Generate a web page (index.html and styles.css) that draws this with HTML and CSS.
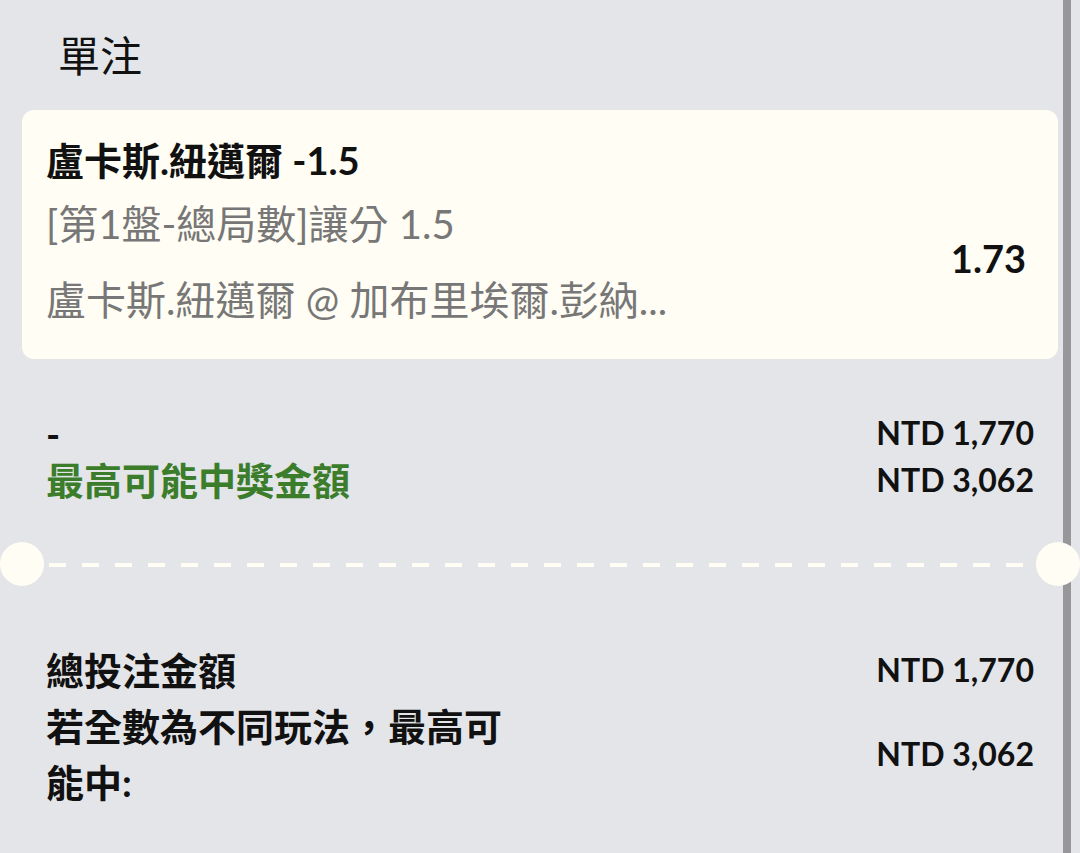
FILE: index.html
```
<!DOCTYPE html>
<html lang="zh-Hant">
<head>
    <meta charset="UTF-8">
    <title>單注</title>
    <link rel="stylesheet" href="styles.css">
</head>
<body>
<div class="page">
    <h1 class="title">單注</h1>

    <div class="betCard">
        <div class="betName">盧卡斯.紐邁爾 -1.5</div>
        <div class="betInfo">[第1盤-總局數]讓分 1.5</div>
        <div class="betInfo betMatch">盧卡斯.紐邁爾 @ 加布里埃爾.彭納...</div>
        <div class="betOdds">1.73</div>
    </div>

    <div class="summary">
        <div class="row">
            <span class="label">-</span>
            <span class="amount">NTD 1,770</span>
        </div>
        <div class="row">
            <span class="label green">最高可能中獎金額</span>
            <span class="amount">NTD 3,062</span>
        </div>
    </div>

    <div class="divider">
        <span class="hole"></span>
        <span class="dashes"></span>
        <span class="hole"></span>
    </div>

    <div class="total">
        <div class="row">
            <span class="label">總投注金額</span>
            <span class="amount">NTD 1,770</span>
        </div>
        <div class="row">
            <span class="label wrap">若全數為不同玩法，最高可能中:</span>
            <span class="amount">NTD 3,062</span>
        </div>
    </div>
</div>
<div class="scrollBar"></div>
</body>
</html>
```

FILE: styles.css
```
html, body {
    margin: 0;
    height: 100%;
}

body {
    background-color: #e4e5e8;
    font-family: Lato, "Noto Sans CJK TC", sans-serif;
    color: #111;
    position: relative;
    overflow: hidden;
}

.page {
    padding: 0 22px;
}

.title {
    margin: 0;
    padding: 28px 0 0 36px;
    height: 110px;
    box-sizing: border-box;
    font-size: 42px;
    font-weight: 400;
    line-height: 56px;
}

.betCard {
    background-color: #fffdf4;
    border-radius: 12px;
    height: 249px;
    box-sizing: border-box;
    padding: 28px 32px 0 24px;
    display: grid;
    grid-template-columns: 1fr auto;
    grid-template-rows: 44px 44px 44px;
    row-gap: 20px;
}

.betName {
    font-size: 38px;
    font-weight: 700;
    line-height: 44px;
}

.betInfo {
    grid-column: 1;
    font-size: 40px;
    line-height: 44px;
    color: #777;
}

.betMatch {
    margin-top: 12px;
}

.betOdds {
    grid-column: 2;
    grid-row: 2 / 4;
    align-self: center;
    margin-top: 4px;
    font-size: 38px;
    font-weight: 700;
}

.summary {
    padding: 52px 24px 0 24px;
}

.row {
    display: flex;
    justify-content: space-between;
    align-items: center;
}

.label {
    font-size: 38px;
    font-weight: 700;
    line-height: 46px;
}

.green {
    color: #3b7d2b;
}

.amount {
    font-size: 32px;
    font-weight: 700;
    line-height: 44px;
}

.summary .row:first-child .amount {
    margin-bottom: 2px;
}

.divider {
    position: relative;
    display: flex;
    align-items: center;
    height: 44px;
    margin: 39px -22px 0 -22px;
    z-index: 1;
}

.hole {
    width: 44px;
    height: 44px;
    border-radius: 50%;
    background-color: #fffdf4;
    flex: none;
}

.dashes {
    flex: 1;
    height: 4px;
    margin: 2px 5px 0 5px;
    background: repeating-linear-gradient(to right, #fffdf4 0, #fffdf4 17px, transparent 17px, transparent 33px);
}

.total {
    padding: 56px 24px 0 24px;
}

.total .label {
    line-height: 56px;
}

.wrap {
    max-width: 475px;
}

.scrollBar {
    position: absolute;
    top: 0;
    bottom: 0;
    left: 1063px;
    width: 8px;
    background-color: #979799;
}
```
